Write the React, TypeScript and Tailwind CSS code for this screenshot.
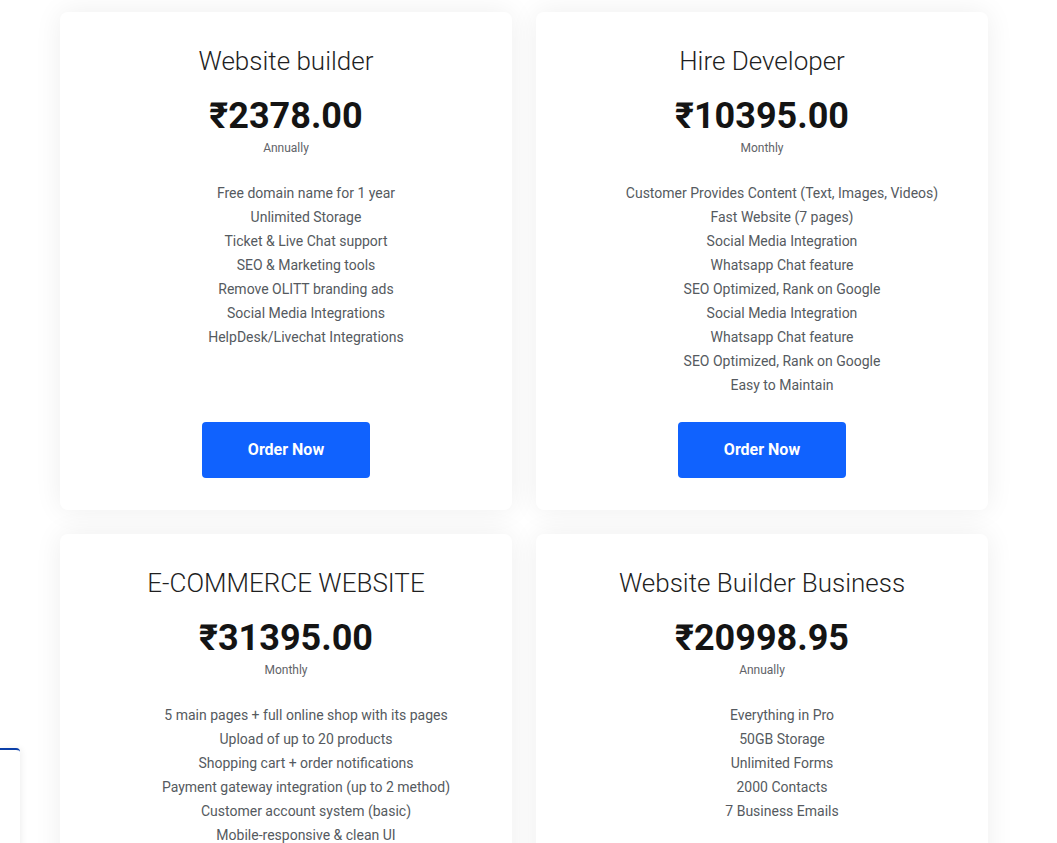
import React from "react";

type Plan = {
  title: string;
  price: string;
  period: string;
  features: string[];
};

const plans: Plan[] = [
  {
    title: "Website builder",
    price: "₹2378.00",
    period: "Annually",
    features: [
      "Free domain name for 1 year",
      "Unlimited Storage",
      "Ticket & Live Chat support",
      "SEO & Marketing tools",
      "Remove OLITT branding ads",
      "Social Media Integrations",
      "HelpDesk/Livechat Integrations",
    ],
  },
  {
    title: "Hire Developer",
    price: "₹10395.00",
    period: "Monthly",
    features: [
      "Customer Provides Content (Text, Images, Videos)",
      "Fast Website (7 pages)",
      "Social Media Integration",
      "Whatsapp Chat feature",
      "SEO Optimized, Rank on Google",
      "Social Media Integration",
      "Whatsapp Chat feature",
      "SEO Optimized, Rank on Google",
      "Easy to Maintain",
    ],
  },
  {
    title: "E-COMMERCE WEBSITE",
    price: "₹31395.00",
    period: "Monthly",
    features: [
      "5 main pages + full online shop with its pages",
      "Upload of up to 20 products",
      "Shopping cart + order notifications",
      "Payment gateway integration (up to 2 method)",
      "Customer account system (basic)",
      "Mobile-responsive & clean UI",
    ],
  },
  {
    title: "Website Builder Business",
    price: "₹20998.95",
    period: "Annually",
    features: [
      "Everything in Pro",
      "50GB Storage",
      "Unlimited Forms",
      "2000 Contacts",
      "7 Business Emails",
    ],
  },
];

function PlanCard({ plan }: { plan: Plan }) {
  return (
    <div className="flex-1 bg-white rounded-lg shadow-[0_0_28px_rgba(0,0,0,0.07)] flex flex-col items-center pt-8 pb-8 px-6">
      <h3 className="text-[26px] leading-[34px] font-light text-[#1f1f1f]">{plan.title}</h3>
      <p className="mt-4 text-[36px] leading-[44px] font-bold text-[#141414]">{plan.price}</p>
      <p className="mt-px text-[12px] leading-[18px] text-[#5f6368]">{plan.period}</p>
      {/* list keeps the default-ish left padding, so it sits a bit right of centre */}
      <ul className="mt-6 mb-[25px] pl-10 flex flex-col items-center">
        {plan.features.map((f, i) => (
          <li key={i} className="text-[14px] leading-6 text-[#555a60] text-center">
            {f}
          </li>
        ))}
      </ul>
      <button className="mt-auto w-[168px] h-14 rounded bg-[#1062fe] text-white text-[16px] font-bold">
        Order Now
      </button>
    </div>
  );
}

export default function App() {
  return (
    <div className="min-h-screen bg-white font-['Roboto',sans-serif] relative">
      <div className="pl-[60px] pt-3 pb-10 w-[988px]">
        <div className="grid grid-cols-2 gap-6">
          {plans.map((p, i) => (
            <div key={i} className="flex flex-col">
              <PlanCard plan={p} />
            </div>
          ))}
        </div>
      </div>

      {/* side widget peeking in from the left edge */}
      <div className="fixed left-0 top-[748px] w-5 h-[120px] bg-white border-t-2 border-[#0b3fa8] rounded-tr shadow-[2px_0_6px_rgba(0,0,0,0.06)]" />
    </div>
  );
}
